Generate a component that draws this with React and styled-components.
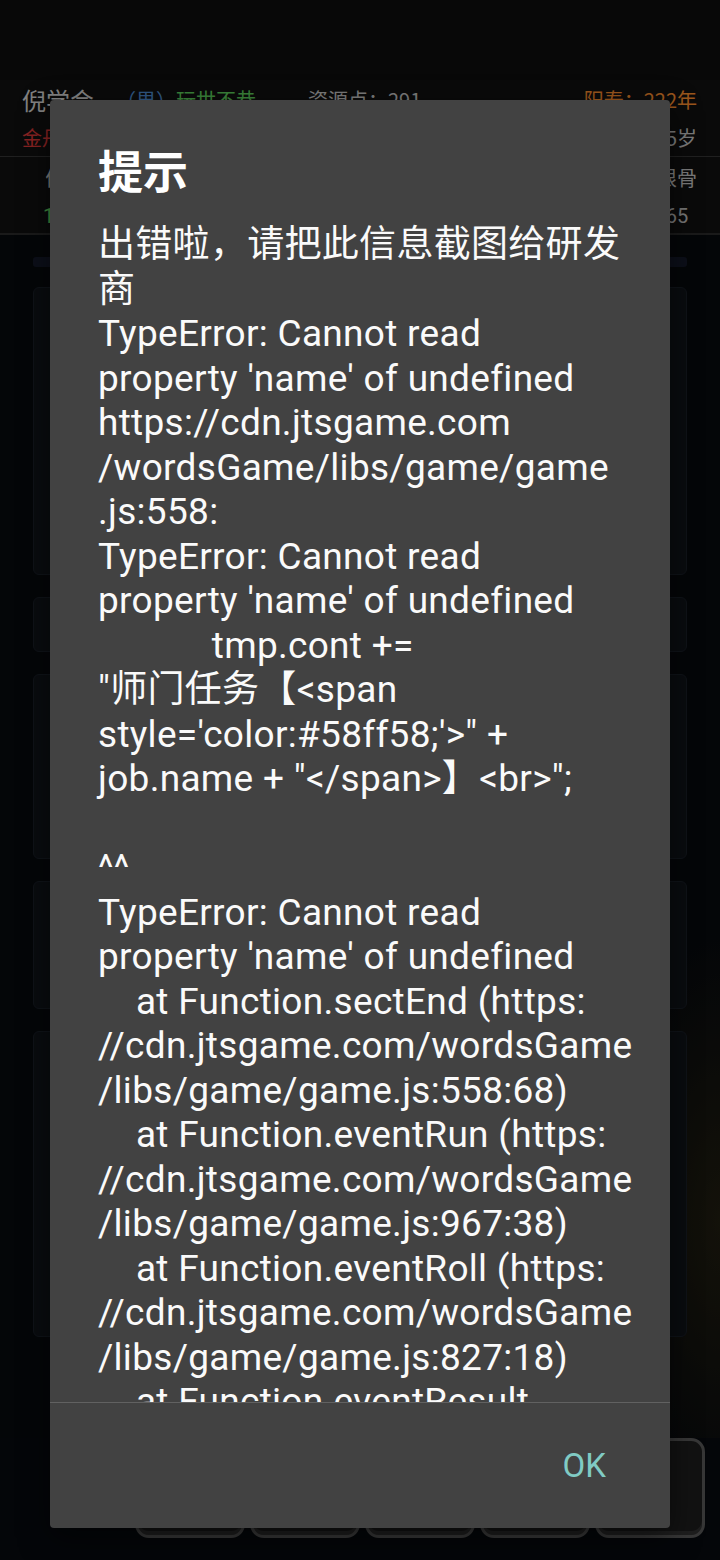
import React from 'react';
import styled, { createGlobalStyle } from 'styled-components';

const GlobalStyle = createGlobalStyle`
  html, body { margin: 0; padding: 0; background: #000; }
  body { font-family: Roboto, "Noto Sans CJK SC", sans-serif; }
  * { box-sizing: border-box; }
`;

const Screen = styled.div`
  position: relative;
  width: 720px;
  height: 1560px;
  overflow: hidden;
  background: #080b10;
  display: flex;
  flex-direction: column;
  font-family: Roboto, "Noto Sans CJK SC", sans-serif;
`;

const StatusBar = styled.div`
  height: 80px;
  flex-shrink: 0;
  background: #0e0e0e;
`;

const Header = styled.header`
  flex-shrink: 0;
  background: #121212;
  border-bottom: 2px solid #2c2c2c;
  display: flex;
  flex-direction: column;
`;

const InfoRow = styled.div`
  height: ${p => p.$h}px;
  display: flex;
  align-items: center;
  justify-content: ${p => p.$justify || 'flex-start'};
  padding: 0 23px 0 22px;
  border-bottom: ${p => (p.$divider ? '1px solid #363636' : 'none')};
`;

const Field = styled.span`
  font-family: "Noto Sans CJK SC", sans-serif;
  font-size: ${p => p.$size || 20}px;
  color: ${p => p.$color || '#cccccc'};
  margin-left: ${p => p.$ml || 0};
  white-space: nowrap;
`;

const StatGrid = styled.div`
  display: flex;
  justify-content: space-between;
  padding: 0 23px 0 43px;
`;

const Stat = styled.div`
  display: flex;
  flex-direction: column;
  align-items: center;
  font-family: "Noto Sans CJK SC", sans-serif;
  font-size: 20px;
`;

const StatLabel = styled.span`
  height: 42px;
  line-height: 42px;
  color: #cccccc;
`;

const StatValue = styled.span`
  height: 34px;
  line-height: 34px;
  color: ${p => p.$color || '#c4c4c4'};
  font-family: Roboto, sans-serif;
`;

const Content = styled.main`
  flex: 1;
  display: flex;
  flex-direction: column;
  gap: 22px;
  padding: 22px 33px 0;
  background: radial-gradient(ellipse 160px 420px at 100% 82%, rgba(150, 120, 30, 0.18), transparent 70%), #070a0e;
`;

const ProgressStrip = styled.div`
  height: 10px;
  margin-bottom: -2px;
  border-radius: 3px;
  background: #141a2a;
`;

const Panel = styled.section`
  height: ${p => p.$h}px;
  flex-shrink: 0;
  border-radius: 6px;
  background: #0f141a;
  border: 1px solid #1a2029;
`;

const BottomBar = styled.nav`
  flex-shrink: 0;
  height: 122px;
  display: flex;
  gap: 5px;
  padding: 0 15px 22px 135px;
`;

const NavButton = styled.button`
  flex: 1;
  height: 100px;
  border-radius: 14px;
  border: 3px solid #5c5c5c;
  box-shadow: inset 0 -4px 0 #333;
  background: #1e1e1e;
  color: #bbb;
  font-family: "Noto Sans CJK SC", sans-serif;
  font-size: 22px;
  display: flex;
  align-items: center;
  justify-content: center;
  padding: 0;
`;

const Scrim = styled.div`
  position: absolute;
  inset: 0;
  background: rgba(0, 0, 0, 0.4);
  display: flex;
  padding: 100px 50px 32px;
`;

const Dialog = styled.div`
  flex: 1;
  display: flex;
  flex-direction: column;
  background: #424242;
  border-radius: 4px;
  overflow: hidden;
  box-shadow: 0 10px 30px rgba(0, 0, 0, 0.5);
`;

const Title = styled.h2`
  margin: 0;
  padding: 45px 48px 0;
  height: 95px;
  line-height: 50px;
  font-family: "Noto Sans CJK SC", sans-serif;
  font-size: 45px;
  font-weight: 700;
  color: #ffffff;
`;

const Message = styled.div`
  flex: 1;
  min-height: 0;
  overflow: hidden;
  margin-top: 28px;
  padding: 0 48px;
  white-space: pre;
  font-family: Roboto, "Noto Sans CJK SC", sans-serif;
  font-size: 37px;
  letter-spacing: 0.3px;
  line-height: 44.5px;
  color: #fafafa;
`;

const Footer = styled.div`
  flex-shrink: 0;
  height: 126px;
  border-top: 1px solid #616161;
  display: flex;
  align-items: center;
  justify-content: flex-end;
  padding-right: 64px;
`;

const OkButton = styled.button`
  border: none;
  background: none;
  padding: 0;
  font-family: Roboto, sans-serif;
  font-size: 33px;
  color: #80cbc4;
  cursor: pointer;
`;

const stats = [
  { label: '修为', value: '1205', color: '#66dd66' },
  { label: '体质', value: '42' },
  { label: '悟性', value: '58' },
  { label: '福缘', value: '31' },
  { label: '魅力', value: '47' },
  { label: '根骨', value: '65' },
];

const panels = [288, 55, 185, 128, 306];
const navItems = ['修炼', '门派', '背包', '商店', '＋'];

const messageLines = [
  '出错啦，请把此信息截图给研发',
  '商',
  'TypeError: Cannot read',
  "property 'name' of undefined",
  'https://cdn.jtsgame.com',
  '/wordsGame/libs/game/game',
  '.js:558:',
  'TypeError: Cannot read',
  "property 'name' of undefined",
  '            tmp.cont +=',
  '"师门任务【<span',
  "style='color:#58ff58;'>\" +",
  'job.name + "</span>】<br>";',
  '',
  '^^',
  'TypeError: Cannot read',
  "property 'name' of undefined",
  '    at Function.sectEnd (https:',
  '//cdn.jtsgame.com/wordsGame',
  '/libs/game/game.js:558:68)',
  '    at Function.eventRun (https:',
  '//cdn.jtsgame.com/wordsGame',
  '/libs/game/game.js:967:38)',
  '    at Function.eventRoll (https:',
  '//cdn.jtsgame.com/wordsGame',
  '/libs/game/game.js:827:18)',
  '    at Function.eventResult',
  '(https://cdn.jtsgame.com/wordsGame',
];

export default function App() {
  return (
    <>
      <GlobalStyle />
      <Screen>
        <StatusBar />
        <Header>
          <InfoRow $h={38}>
            <Field $size={24} $color="#d5d5d5">倪学会</Field>
            <Field $color="#4f8fd8" $ml="22px">（男）</Field>
            <Field $color="#5fd65f">玩世不恭</Field>
            <Field $ml="52px">资源点：291</Field>
            <Field $color="#ff8f2f" $ml="auto">阳寿：222年</Field>
          </InfoRow>
          <InfoRow $h={39} $justify="space-between" $divider>
            <Field $color="#e03a3a">金丹期</Field>
            <Field>年龄：25岁</Field>
          </InfoRow>
          <StatGrid>
            {stats.map(s => (
              <Stat key={s.label}>
                <StatLabel>{s.label}</StatLabel>
                <StatValue $color={s.color}>{s.value}</StatValue>
              </Stat>
            ))}
          </StatGrid>
        </Header>
        <Content>
          <ProgressStrip />
          {panels.map((h, i) => (
            <Panel key={i} $h={h} />
          ))}
        </Content>
        <BottomBar>
          {navItems.map(n => (
            <NavButton key={n}>{n}</NavButton>
          ))}
        </BottomBar>
        <Scrim>
          <Dialog role="alertdialog">
            <Title>提示</Title>
            <Message>{messageLines.join('\n')}</Message>
            <Footer>
              <OkButton>OK</OkButton>
            </Footer>
          </Dialog>
        </Scrim>
      </Screen>
    </>
  );
}
